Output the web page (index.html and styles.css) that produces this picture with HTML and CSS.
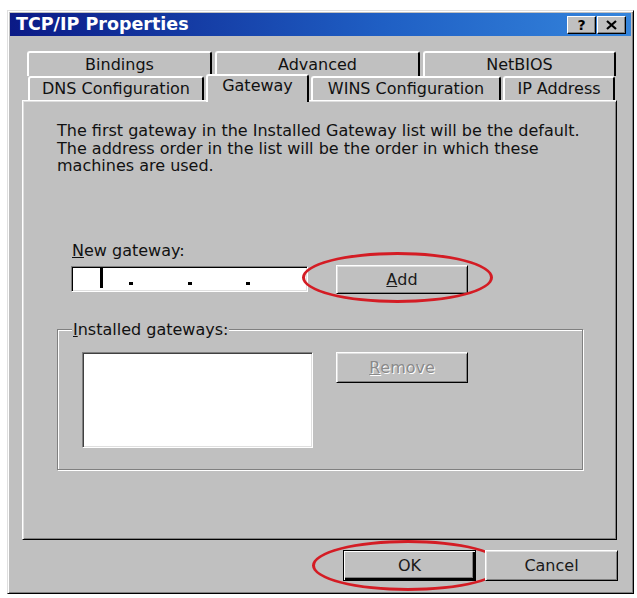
FILE: index.html
```html
<!DOCTYPE html>
<html>
<head>
    <meta charset="utf-8">
    <title>TCP/IP Properties</title>
    <link rel="stylesheet" href="styles.css">
</head>
<body>
    <div class="window">
        <div class="titlebar">
            <span class="title">TCP/IP Properties</span>
            <div class="title_buttons">
                <div class="title_btn">?</div>
                <div class="title_btn">
                    <svg width="11" height="10" viewBox="0 0 11 10">
                        <path d="M1 1 L10 9 M10 1 L1 9" stroke="#000" stroke-width="2.2"/>
                    </svg>
                </div>
            </div>
        </div>

        <div class="tabrow back">
            <div class="tab w_bindings">Bindings</div>
            <div class="tab w_advanced">Advanced</div>
            <div class="tab w_netbios">NetBIOS</div>
        </div>
        <div class="tabrow front">
            <div class="tab w_dns">DNS Configuration</div>
            <div class="tab selected w_gateway">Gateway</div>
            <div class="tab w_wins">WINS Configuration</div>
            <div class="tab w_ip">IP Address</div>
        </div>

        <div class="panel">
            <p class="info">The first gateway in the Installed Gateway list will be the default. The address order in the list will be the order in which these machines are used.</p>

            <div class="label"><u>N</u>ew gateway:</div>
            <div class="newrow">
                <div class="ipfield">
                    <div class="octet"><span class="caret"></span></div>
                    <span class="dot"></span>
                    <div class="octet"></div>
                    <span class="dot"></span>
                    <div class="octet"></div>
                    <span class="dot"></span>
                    <div class="octet"></div>
                </div>
                <div class="btn add_btn"><u>A</u>dd<span class="mark"></span></div>
            </div>

            <fieldset class="group">
                <legend><u>I</u>nstalled gateways:</legend>
                <div class="grouprow">
                    <div class="listbox"></div>
                    <div class="btn disabled remove_btn"><u>R</u>emove</div>
                </div>
            </fieldset>
        </div>

        <div class="footer">
            <div class="btn default ok_btn">OK<span class="mark"></span></div>
            <div class="btn">Cancel</div>
        </div>
    </div>
</body>
</html>
```

FILE: styles.css
```css
* {
    box-sizing: border-box;
}
body {
    margin: 10px 0 0 7px;
    background: #fff;
    font-family: "DejaVu Sans", sans-serif;
    font-size: 16px;
    color: #111;
}
.window {
    width: 627px;
    height: 584px;
    padding: 2px;
    background: #c0c0c0;
    border: 1px solid;
    border-color: #dfdfdf #000 #000 #dfdfdf;
    box-shadow: inset 1px 1px #fff, inset -1px -1px #808080;
}

/* title bar */
.titlebar {
    height: 23px;
    display: flex;
    align-items: center;
    justify-content: space-between;
    padding: 0 5px 0 6px;
    background: linear-gradient(to right, #0b1a86, #1f5fc4 60%, #3585dc);
}
.title {
    color: #fff;
    font-weight: bold;
    font-size: 17.5px;
    line-height: 23px;
}
.title_buttons {
    display: flex;
    gap: 1px;
}
.title_btn {
    width: 29px;
    height: 18px;
    display: flex;
    align-items: center;
    justify-content: center;
    background: #c0c0c0;
    border: 1px solid;
    border-color: #fff #000 #000 #fff;
    box-shadow: inset -1px -1px #808080;
    font-weight: bold;
    font-size: 14px;
    color: #000;
}

/* tabs */
.tabrow {
    display: flex;
    align-items: flex-start;
}
.tabrow.back {
    margin-top: 15px;
    padding-left: 17px;
    gap: 3px;
}
.tabrow.front {
    padding-left: 18px;
    height: 24px;
    gap: 2px;
}
.tab {
    text-align: center;
    line-height: 22px;
    background: #c0c0c0;
    border-top: 2px solid #fff;
    border-left: 2px solid #fff;
    border-right: 2px solid #000;
    border-radius: 3px 3px 0 0;
}
.back .tab {
    height: 25px;
    padding-top: 1px;
}
.front .tab {
    height: 24px;
    padding-top: 0;
    line-height: 21px;
}
.front .tab.selected {
    position: relative;
    z-index: 1;
    height: 28px;
    margin-top: -2px;
    line-height: 19px;
}
.w_bindings { width: 185px; }
.w_advanced { width: 205px; }
.w_netbios { width: 193px; }
.w_dns { width: 176px; }
.w_gateway { width: 103px; }
.w_wins { width: 190px; }
.w_ip { width: 112px; }

/* page body */
.panel {
    margin-left: 12px;
    width: 595px;
    height: 440px;
    padding: 21px 0 0 34px;
    border: 1px solid;
    border-color: #fff #000 #000 #fff;
    box-shadow: inset 1px 1px #dfdfdf, inset -1px -1px #808080;
}
.info {
    margin: 0;
    width: 550px;
    line-height: 17.5px;
}
.label {
    margin: 67px 0 0 15px;
    line-height: 18px;
}
.newrow {
    display: flex;
    align-items: flex-start;
    gap: 28px;
    margin: 5px 0 0 14px;
}
.ipfield {
    margin-top: 1px;
    width: 237px;
    height: 26px;
    display: flex;
    align-items: flex-end;
    padding: 0 2px 6px;
    background: #fff;
    border: 1px solid;
    border-color: #808080 #fff #fff #808080;
    box-shadow: inset 1px 1px #000, inset -1px -1px #dfdfdf;
}
.octet {
    flex: 1;
    height: 100%;
    display: flex;
    justify-content: center;
    align-items: flex-end;
}
.caret {
    width: 3px;
    height: 20px;
    margin-bottom: -3px;
    background: #000;
}
.dot {
    width: 4px;
    height: 3px;
    background: #000;
}

/* buttons */
.btn {
    position: relative;
    width: 132px;
    height: 29px;
    display: flex;
    align-items: center;
    justify-content: center;
    background: #c0c0c0;
    border: 1px solid;
    border-color: #fff #000 #000 #fff;
    box-shadow: inset 1px 1px #dfdfdf, inset -1px -1px #808080;
    color: #1a1a1a;
}
.btn.default {
    border-color: #000;
    box-shadow: inset 1px 1px #fff, inset -2px -2px #000, inset -3px -3px #808080;
}
.btn.disabled {
    color: #8a8a8a;
    text-shadow: 1px 1px #fff;
}
.mark {
    position: absolute;
    border: 3px solid #d41c24;
    border-radius: 50%;
    pointer-events: none;
}
.add_btn .mark {
    left: -35px;
    top: -14px;
    width: 191px;
    height: 51px;
}

/* installed gateways group */
.group {
    margin: 27px 0 0 0;
    width: 526px;
    padding: 13px 0 21px 24px;
    border: 1px solid #808080;
    box-shadow: inset 1px 1px #fff, 1px 1px #fff;
}
.group legend {
    margin-left: -10px;
    padding: 0 1px;
    line-height: 18px;
    background: #c0c0c0;
}
.grouprow {
    display: flex;
    align-items: flex-start;
    gap: 23px;
}
.listbox {
    width: 231px;
    height: 96px;
    background: #fff;
    border: 1px solid;
    border-color: #808080 #fff #fff #808080;
    box-shadow: inset 1px 1px #404040, inset -1px -1px #dfdfdf;
}
.remove_btn {
    height: 31px;
}

/* dialog buttons */
.footer {
    display: flex;
    justify-content: flex-end;
    gap: 9px;
    margin-top: 10px;
    padding-right: 13px;
}
.footer .btn {
    height: 31px;
    width: 133px;
}
.ok_btn .mark {
    left: -32px;
    top: -11px;
    width: 192px;
    height: 51px;
}
```
